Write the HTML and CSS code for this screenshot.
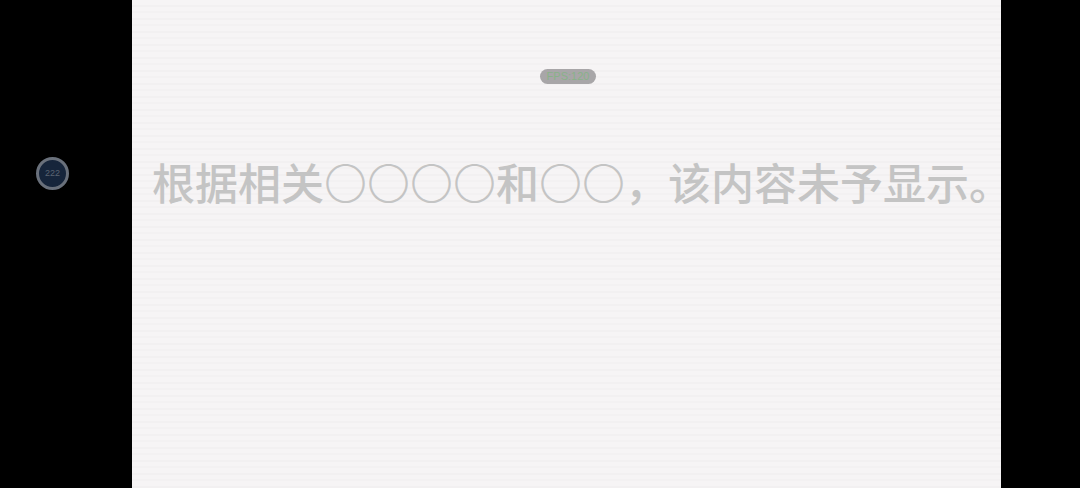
FILE: index.html
```html
<!DOCTYPE html>
<html lang="zh">
<head>
<meta charset="utf-8">
<title>内容未予显示</title>
<link rel="stylesheet" href="styles.css">
</head>
<body>
<div class="screen">
  <aside class="rail"></aside>
  <main class="stage">
    <div class="fps">FPS:120</div>
    <p class="notice">根据相关<span class="mask">〇〇〇〇</span>和<span class="mask">〇〇</span>，该内容未予显示。</p>
  </main>
  <aside class="rail"></aside>
  <div class="bubble">222</div>
</div>
</body>
</html>
```

FILE: styles.css
```css
* { box-sizing: border-box; }
html, body { margin: 0; height: 100%; background: #000; overflow: hidden; }
.screen { display: flex; width: 1080px; height: 488px; background: #000; }
.rail { flex: 0 0 79px; }
.rail:first-child { flex-basis: 132px; }
.stage {
  flex: 0 0 869px;
  min-width: 0;
  display: flex;
  flex-direction: column;
  align-items: flex-start;
  padding: 69px 0 0 20px;
  background-color: #f6f4f5;
  background-image:
    repeating-linear-gradient(180deg, transparent 0, transparent 5px, #f2f0f1 5px, #f2f0f1 7px, transparent 7px, transparent 13px),
    repeating-linear-gradient(180deg, transparent 0, transparent 11px, #f3f1f2 11px, #f3f1f2 13px);
}
.fps {
  margin-left: 388px;
  width: 56px;
  height: 15px;
  border-radius: 8px;
  background: #a8a6a8;
  color: #88b288;
  font: 11px/15px "Liberation Sans", sans-serif;
  text-align: center;
  white-space: nowrap;
}
.notice {
  margin: 66px 0 0;
  font: 500 43px/62px "Noto Sans CJK SC", serif;
  color: #c4c4c4;
  white-space: nowrap;
}
.mask { font-weight: 300; }
.bubble {
  position: absolute;
  left: 36px;
  top: 157px;
  width: 33px;
  height: 33px;
  border: 3px solid #69707b;
  border-radius: 50%;
  background: #16253b;
  color: #5a6472;
  font: 9px/27px "Liberation Sans", sans-serif;
  text-align: center;
}
```
